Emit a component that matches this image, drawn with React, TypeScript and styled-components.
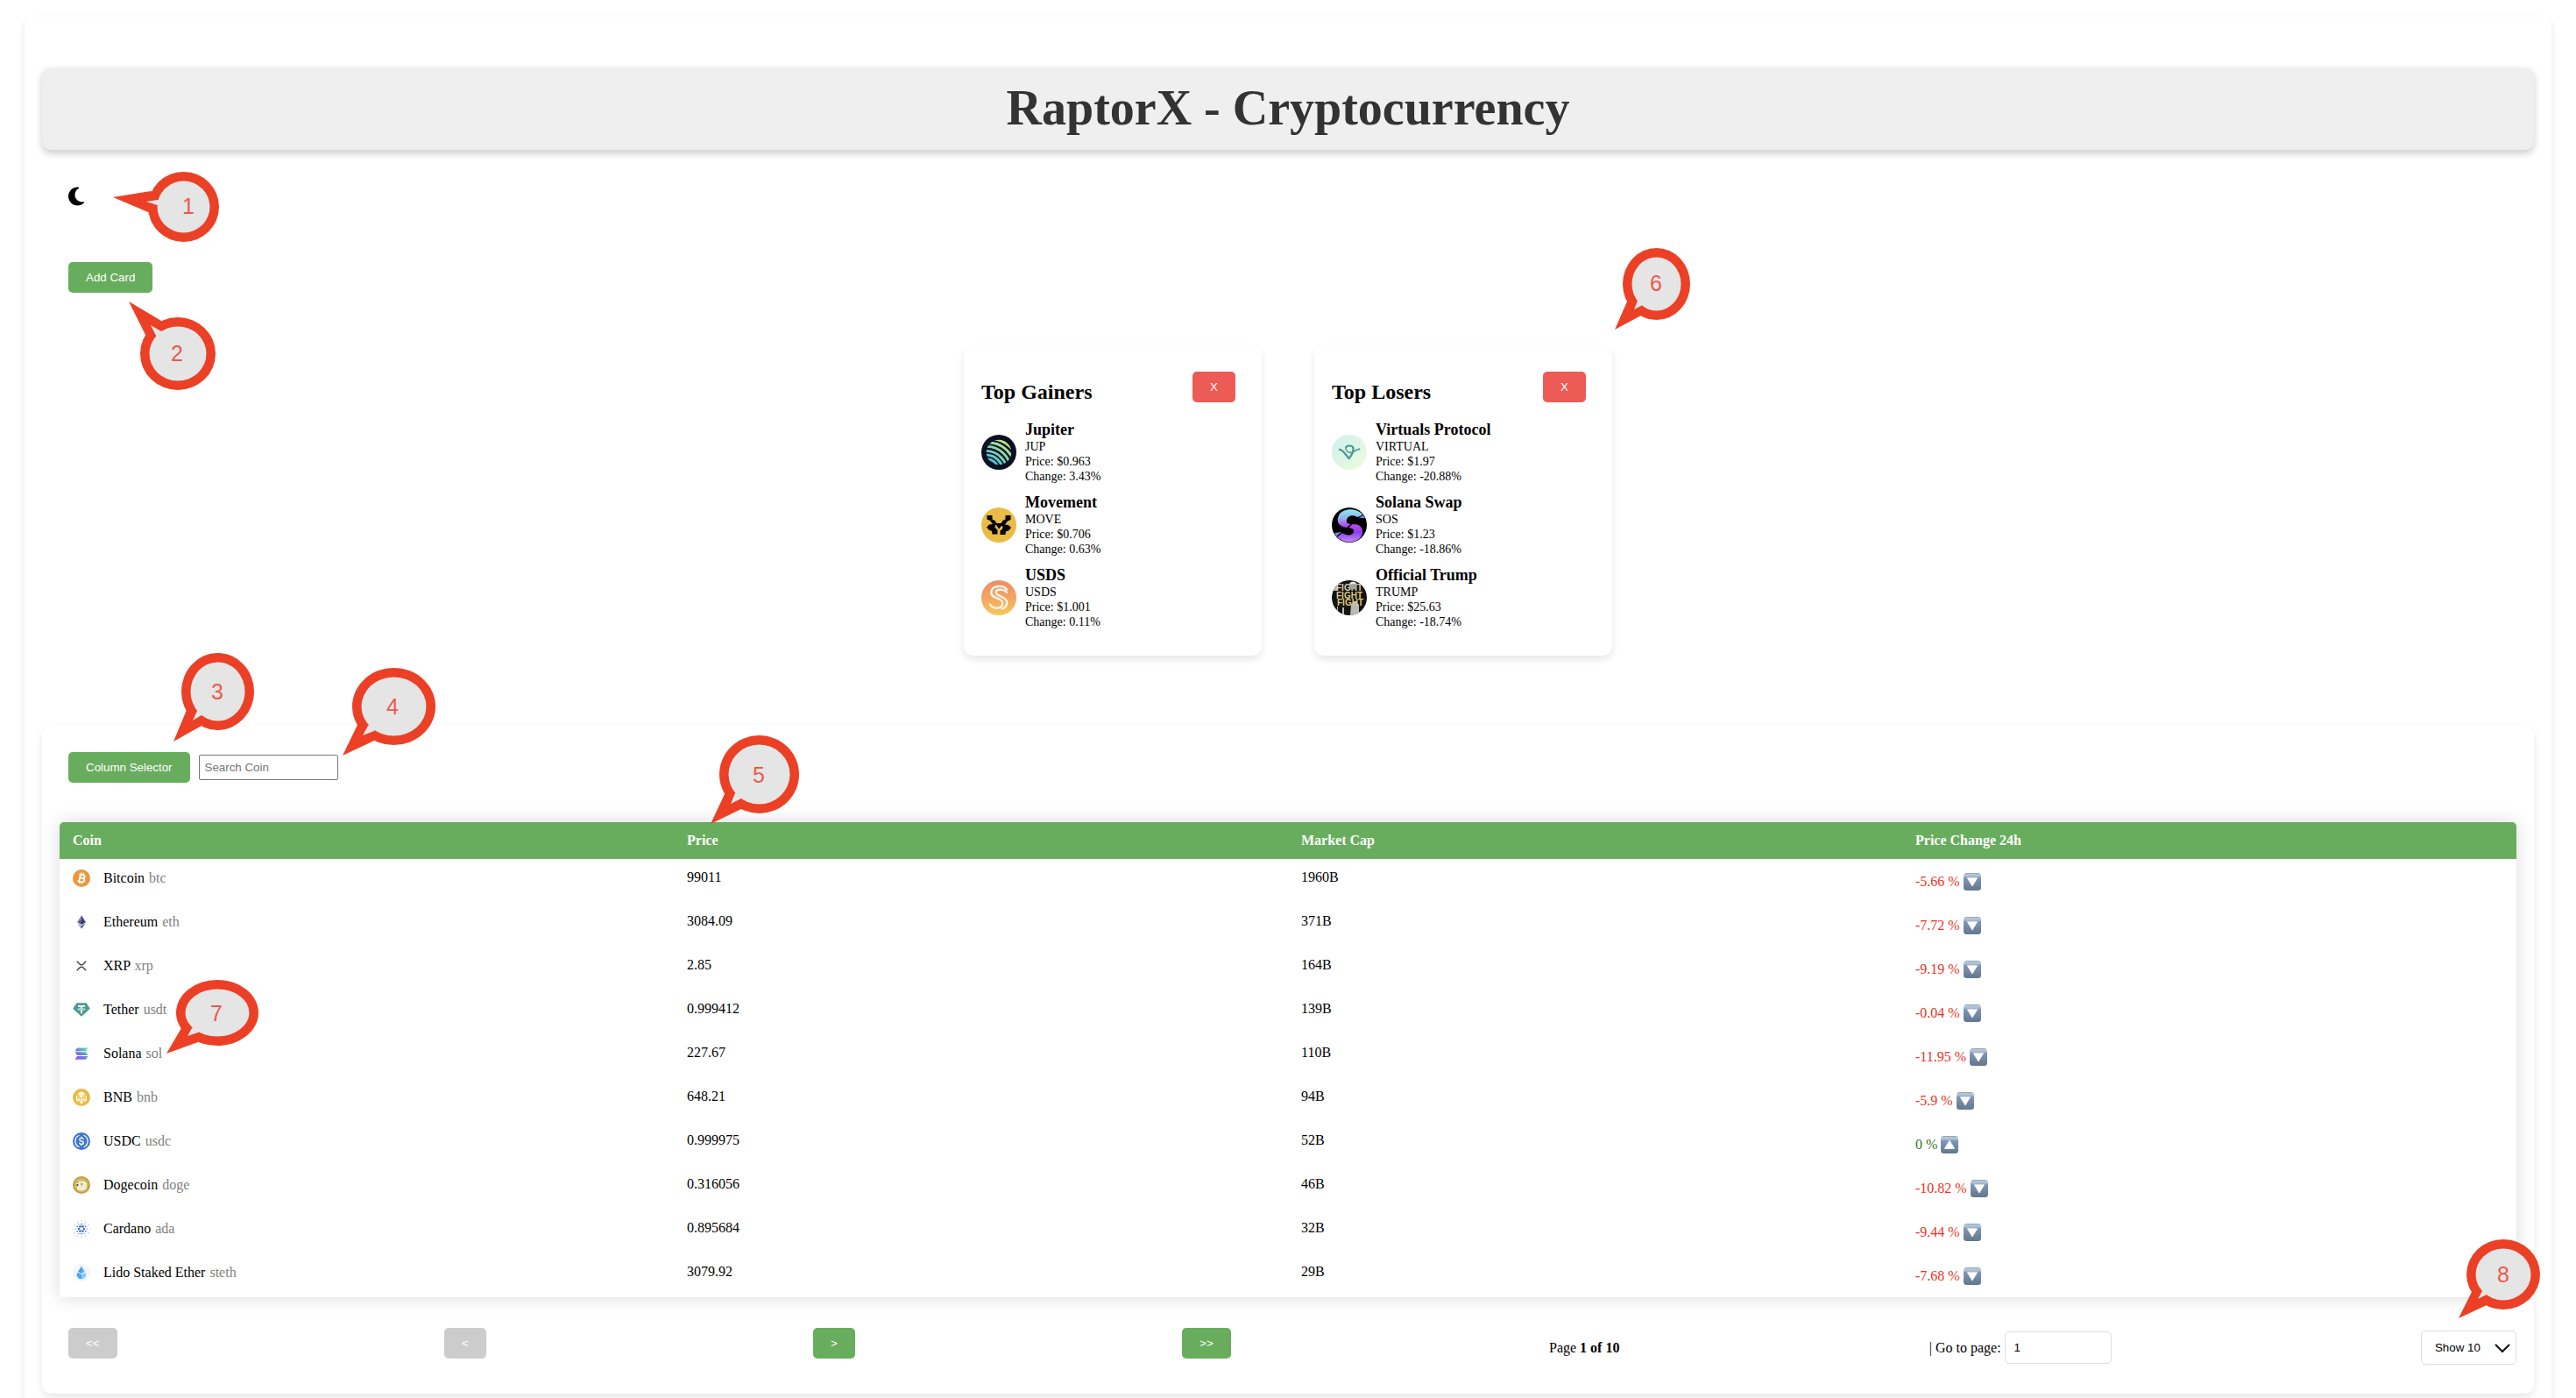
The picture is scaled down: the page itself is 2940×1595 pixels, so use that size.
import React, { useState } from "react";
import styled, { createGlobalStyle } from "styled-components";

const GREEN = "#68ad5d";
const RED = "#ec5b56";
const SERIF = `"Liberation Serif", "Times New Roman", serif`;
const SANS = `"Liberation Sans", Arial, sans-serif`;

const GlobalStyle = createGlobalStyle`
  *, *::before, *::after { box-sizing: border-box; }
  body {
    margin: 0;
    background: #fff;
    color: #000;
    font-family: ${SERIF};
    font-size: 16px;
    line-height: 18px;
  }
`;

/* ---------- layout ---------- */

const Page = styled.div`
  position: relative;
  display: flow-root;
`;

const Container = styled.main`
  margin: 19px 28px;
  padding: 20px;
  border-radius: 10px;
  background: #fff;
  box-shadow: 0 4px 8px rgba(0, 0, 0, 0.1);
`;

const Title = styled.h1`
  margin: 38px 0 0;
  padding: 14px 15px 16px;
  border-radius: 10px;
  background: #efefef;
  color: #333;
  font-size: 56px;
  line-height: 64px;
  text-align: center;
  box-shadow: 0 4px 8px rgba(0, 0, 0, 0.2);
`;

const Toolbar = styled.div`
  display: flex;
  flex-direction: column;
  align-items: flex-start;
  gap: 53px;
  padding: 41px 20px 0;
`;

const ThemeToggle = styled.button`
  display: flex;
  margin: 0 10px;
  padding: 0;
  border: 0;
  background: none;
  color: #000;
  cursor: pointer;
`;

const Button = styled.button<{ $danger?: boolean }>`
  height: 35px;
  margin: 10px 10px 20px;
  padding: 0 20px;
  border: 0;
  border-radius: 5px;
  background: ${(p) => (p.$danger ? RED : GREEN)};
  color: #fff;
  font-family: ${SANS};
  cursor: pointer;

  &:disabled {
    background: #ccc;
    cursor: not-allowed;
  }
`;

/* ---------- cards ---------- */

const Cards = styled.section`
  display: flex;
  flex-wrap: wrap;
  justify-content: center;
  gap: 60px;
  margin: 40px 0 80px;
`;

const Card = styled.article`
  width: 340px;
  padding: 20px 20px 30px;
  border-radius: 10px;
  background: #fff;
  box-shadow: 0 4px 8px rgba(0, 0, 0, 0.1);
`;

const CardHeader = styled.header`
  display: flex;
  align-items: flex-end;
  justify-content: space-between;
`;

const CardTitle = styled.h2`
  margin: 0 0 18px;
  font-size: 24px;
  line-height: 28px;
`;

const Movers = styled.ul`
  display: grid;
  gap: 10px;
  margin: 0;
  padding: 0;
  list-style: none;
`;

const Mover = styled.li`
  display: flex;
  align-items: center;
  gap: 10px;
  font-size: 14px;
  line-height: 17px;
`;

const MoverName = styled.h3`
  margin: 0;
  font-size: 18px;
  line-height: 22px;
`;

/* ---------- table ---------- */

const Panel = styled.section`
  padding: 20px;
  border-radius: 10px;
  background: #fff;
  box-shadow: 0 4px 8px rgba(0, 0, 0, 0.1);
`;

const Filters = styled.div`
  display: flex;
  align-items: center;
`;

const Search = styled.input`
  width: 159px;
  height: 29px;
  margin: 0 0 10px;
  padding: 0 6px;
  border: 1px solid #767676;
  border-radius: 2px;
  font-family: ${SANS};
  &::placeholder { color: #757575; }
`;

const Table = styled.table`
  width: 100%;
  margin: 25px 0;
  border-spacing: 0;
  border-radius: 5px 5px 0 0;
  table-layout: fixed;
  overflow: hidden;
  background: #fff;
  box-shadow: 0 0 20px rgba(0, 0, 0, 0.15);
`;

const Th = styled.th`
  padding: 12px 15px;
  background: ${GREEN};
  color: #fff;
  text-align: left;
`;

const Td = styled.td`
  height: 50px;
  padding: 12px 15px;
  vertical-align: top;
`;

const Coin = styled.div`
  display: flex;
  align-items: center;
  gap: 15px;
  height: 20px;
`;

const Ticker = styled.span`
  margin-left: 1px;
  color: gray;
`;

const Change = styled.div<{ $up: boolean }>`
  display: flex;
  align-items: center;
  gap: 4px;
  padding-top: 2px;
  height: 26px;
  color: ${(p) => (p.$up ? "#2b7519" : "#ea3323")};
`;

/* ---------- pagination ---------- */

const Pager = styled.nav`
  display: flex;
  align-items: center;
  justify-content: space-between;
`;

const GoTo = styled.div`
  display: flex;
  align-items: center;
  gap: 4px;
`;

const PageInput = styled.input`
  width: 122px;
  height: 37px;
  padding: 0 10px;
  border: 1px solid #ddd;
  border-radius: 5px;
  font-family: ${SANS};
`;

const SelectWrap = styled.div`
  display: grid;
  align-items: center;
  justify-items: end;
  & > * { grid-area: 1 / 1; }
  & > svg { margin-right: 6px; pointer-events: none; }
`;

const Select = styled.select`
  height: 39px;
  padding: 0 40px 0 15px;
  border: 1px solid #ddd;
  border-radius: 5px;
  appearance: none;
  background: #fff;
  color: #000;
  font-family: ${SANS};
`;

/* ---------- annotations ---------- */

const CalloutLayer = styled.svg`
  position: absolute;
  overflow: visible;
  pointer-events: none;
`;

const CalloutDigit = styled.text`
  fill: #ea5a4b;
  font-family: ${SANS};
  font-size: 25px;
  text-anchor: middle;
`;

type Pt = [number, number];
type CalloutData = {
  n: number;
  box: [number, number, number, number];
  tip: Pt;
  outer: [Pt, Pt];
  notch: Pt;
  inner: [Pt, Pt];
  digit: Pt;
};

/* box: left, top, right, bottom of the balloon; the rest are points of its tail */
const callouts: CalloutData[] = [
  { n: 1, box: [169, 196, 250, 276], tip: [129, 225], outer: [[172, 218], [169, 242]], notch: [167, 230], inner: [[180, 228], [179, 234]], digit: [215, 244] },
  { n: 2, box: [160, 362, 246, 445], tip: [147, 344], outer: [[184, 366], [166, 382]], notch: [172, 371], inner: [[184, 378], [178, 383]], digit: [202, 412] },
  { n: 3, box: [207, 745, 290, 833], tip: [198, 846], outer: [[213, 810], [230, 828]], notch: [220, 822], inner: [[225, 811], [230, 816]], digit: [248, 798] },
  { n: 4, box: [402, 762, 497, 850], tip: [391, 862], outer: [[408, 827], [427, 845]], notch: [414, 839], inner: [[420, 828], [427, 834]], digit: [448, 815] },
  { n: 5, box: [821, 839, 912, 928], tip: [811, 940], outer: [[827, 906], [846, 923]], notch: [834, 917], inner: [[839, 905], [846, 911]], digit: [866, 893] },
  { n: 6, box: [1852, 283, 1929, 365], tip: [1843, 376], outer: [[1857, 344], [1873, 360]], notch: [1865, 353], inner: [[1869, 343], [1873, 349]], digit: [1890, 332] },
  { n: 7, box: [201, 1118, 295, 1193], tip: [190, 1202], outer: [[207, 1173], [226, 1189]], notch: [214, 1182], inner: [[219, 1173], [226, 1178]], digit: [247, 1165] },
  { n: 8, box: [2815, 1414, 2899, 1494], tip: [2806, 1504], outer: [[2821, 1474], [2838, 1489]], notch: [2828, 1482], inner: [[2833, 1473], [2838, 1477]], digit: [2857, 1463] },
];

function Callout({ n, box, tip, outer, notch, inner, digit }: CalloutData) {
  const [l, t, r, b] = box;
  const w = r - l;
  const h = b - t;
  const at = ([x, y]: Pt) => `${x - l},${y - t}`;
  const center = `${w / 2},${h / 2}`;
  return (
    <CalloutLayer width={w} height={h} style={{ left: l, top: t }} aria-label={`Note ${n}`}>
      <g fill="#eb4025">
        <ellipse cx={w / 2} cy={h / 2} rx={w / 2} ry={h / 2} />
        <polygon points={[at(outer[0]), at(tip), at(outer[1]), center].join(" ")} />
      </g>
      <g fill="#e5e5e5">
        <ellipse cx={w / 2} cy={h / 2} rx={w / 2 - 10.5} ry={h / 2 - 10.5} />
        <polygon points={[at(inner[0]), at(notch), at(inner[1]), center].join(" ")} />
      </g>
      <CalloutDigit x={digit[0] - l} y={digit[1] - t}>{n}</CalloutDigit>
    </CalloutLayer>
  );
}

/* ---------- icons ---------- */

const Moon = () => (
  <svg width="18" height="24" viewBox="0 0 384 512" fill="currentColor" aria-hidden="true">
    <path d="M223.5 32C100 32 0 132.3 0 256S100 480 223.5 480c60.6 0 115.5-24.2 155.8-63.4c5-4.9 6.3-12.5 3.1-18.7s-10.1-9.7-17-8.5c-9.8 1.7-19.8 2.6-30.1 2.6c-96.9 0-175.5-78.8-175.5-176c0-65.8 36-123.1 89.3-153.3c6.1-3.5 9.2-10.5 7.7-17.3s-7.3-11.9-14.3-12.5c-6.3-.5-12.6-.8-19-.8z" />
  </svg>
);

const Chevron = () => (
  <svg width="20" height="14" viewBox="0 0 20 14" fill="none" stroke="#111" strokeWidth="2" aria-hidden="true">
    <path d="M2 3l8 8 8-8" />
  </svg>
);

const Arrow = ({ up }: { up: boolean }) => (
  <svg width="20" height="20" viewBox="0 0 20 20" role="img" aria-label={up ? "up" : "down"}>
    <defs>
      <linearGradient id="arrowTile" x1="0" y1="0" x2="0" y2="1">
        <stop offset="0" stopColor="#8497a8" />
        <stop offset=".08" stopColor="#b9cbdb" />
        <stop offset=".22" stopColor="#a3b7cd" />
        <stop offset=".27" stopColor="#7f97b8" />
        <stop offset=".6" stopColor="#7488a5" />
        <stop offset="1" stopColor="#62768c" />
      </linearGradient>
    </defs>
    <rect width="20" height="20" rx="3.5" fill="url(#arrowTile)" />
    <path d={up ? "M10 5.2L15.6 14.4H4.4z" : "M10 15L4.4 5.8H15.6z"} fill="#fff" stroke="#fff" strokeWidth=".8" strokeLinejoin="round" />
  </svg>
);

const Logo = ({ id, size }: { id: string; size: number }) => (
  <svg width={size} height={size} viewBox="0 0 40 40" aria-hidden="true">{logos[id]}</svg>
);

const logos: Record<string, React.ReactNode> = {
  JUP: (
    <>
      <defs>
        <linearGradient id="jup" gradientUnits="userSpaceOnUse" x1="10" y1="34" x2="30" y2="7">
          <stop offset="0" stopColor="#45b8e0" />
          <stop offset=".5" stopColor="#7fd6b0" />
          <stop offset="1" stopColor="#cfe978" />
        </linearGradient>
        <clipPath id="jupDisc"><circle cx="20" cy="20" r="14.3" /></clipPath>
      </defs>
      <circle cx="20" cy="20" r="20" fill="#0b1022" />
      <g fill="none" stroke="url(#jup)" strokeWidth="2.9" clipPath="url(#jupDisc)">
        <circle cx="5" cy="43" r="15.5" />
        <circle cx="5" cy="43" r="20" />
        <circle cx="5" cy="43" r="24.6" />
        <circle cx="6" cy="41" r="27.6" />
        <circle cx="8" cy="39" r="30" />
        <circle cx="10" cy="37" r="32.5" />
      </g>
    </>
  ),
  MOVE: (
    <>
      <circle cx="20" cy="20" r="20" fill="#e8bc45" />
      <path d="M6.5 9h6v4.500l3 1.500 2 3h5l2-3 3-1.500V9h6v5l-3.500 1.500-3 4 4 .5 3 3-2.500 3-3.500 1.500-.5 3.500h-6v-4.500l3-2.500-.5-3h-1L20 24.500 17 20h-1l-.5 3 3 2.500V30.500h-6l-.5-3.500-3.500-1.500-2.500-3 3-3 4-.5-3-4-3.500-1.500z" />
    </>
  ),
  USDS: (
    <>
      <defs>
        <linearGradient id="usds" x1="0" y1="0" x2="0" y2="1">
          <stop offset="0" stopColor="#ee8d66" />
          <stop offset=".55" stopColor="#f2a763" />
          <stop offset="1" stopColor="#f7cb55" />
        </linearGradient>
      </defs>
      <circle cx="20" cy="20" r="20" fill="url(#usds)" />
      <path d="M29 10.500C25.500 5.500 12 5 11.300 13.500c-.3 5 5 6.500 9 8 6 2.500 4.500 9-.8 10-4.500.8-8-1-9.500-4M29 14c-2-3.500-12-5-12.500-.5 0 3 3.500 4 7 5.500 9 4 6 11.500.5 13.500" fill="none" stroke="#fff3e6" strokeWidth="2.400" strokeLinecap="round" />
    </>
  ),
  VIRTUAL: (
    <>
      <defs>
        <linearGradient id="virtual" x1="0" y1="0" x2="1" y2="1">
          <stop offset="0" stopColor="#cdeff0" />
          <stop offset="1" stopColor="#effcda" />
        </linearGradient>
      </defs>
      <circle cx="20" cy="20" r="20" fill="url(#virtual)" />
      <g fill="none" stroke="#4b9794">
        <path d="M16 15.500c0-4 8-4 8.500 0 .3 4-2 8-5 11.500-3.500-3-5-9-11.500-10.500" strokeWidth="2.200" />
        <path d="M16 15.500c0 4 4 5.500 7 4.500 3-1.200 5-3 8.500-3.800" strokeWidth="1.600" />
      </g>
      <circle cx="31.500" cy="16.500" r=".9" fill="#4b9794" />
    </>
  ),
  SOS: (
    <>
      <defs>
        <clipPath id="sosDisc"><circle cx="20" cy="20" r="19.500" /></clipPath>
        <linearGradient id="sos" x1="0" y1="0" x2="0" y2="1">
          <stop offset="0" stopColor="#8cecf0" />
          <stop offset=".3" stopColor="#96a6ee" />
          <stop offset=".48" stopColor="#b44bf0" />
          <stop offset=".7" stopColor="#8b40ec" />
          <stop offset="1" stopColor="#c391f5" />
        </linearGradient>
      </defs>
      <circle cx="20" cy="20" r="20" />
      <g clipPath="url(#sosDisc)">
        <path d="M36 9C30 0 12 0 8 9c-4 9 2 13 9 14 4 .6 8 0 8 4 0 5-8 6-13 2L4 33c6 8 24 10 29 1 5-8 1-15-9-15-5 0-8-1-7-5 1-5 8-6 12-3z" fill="url(#sos)" />
        <path d="M36 8L6 33" stroke="#000" strokeWidth="1.600" />
        <path d="M30 13l8-6v5h-6zM3 29l8-1-6 5z" fill="#7f8bf0" />
      </g>
    </>
  ),
  TRUMP: (
    <>
      <defs>
        <clipPath id="trumpDisc"><circle cx="20" cy="20" r="20" /></clipPath>
      </defs>
      <g clipPath="url(#trumpDisc)">
        <rect width="40" height="40" fill="#15130f" />
        <path d="M0 10l7-5v7H0zM21 40l1-13 5-3 4 4 0 12zM12 31h2v9h-2zM6 30h1v8H6z" fill="#b9b9b6" />
        <g fill="#dcc983" fontFamily="Liberation Sans, Arial, sans-serif" fontWeight="700" fontSize="10">
          <text x="5" y="12" fill="#d6cfb6">FIGHT</text>
          <text x="5" y="20.500">FIGHT</text>
          <text x="6" y="29">FIGHT</text>
        </g>
        <circle cx="24" cy="6" r="4.500" fill="#a3a19b" />
        <path d="M20 5c1-4 7-4 9 0l-4-1z" fill="#ecece8" />
      </g>
    </>
  ),
  btc: (
    <>
      <circle cx="20" cy="20" r="20" fill="#e9983d" />
      <g transform="rotate(13 20 20)" fill="none" stroke="#fff" strokeWidth="3.600">
        <path d="M13 11.500h9c6 0 6 8 0 8h-5m5 0c7.500 0 7.500 9 0 9h-9M16 11.500v17" />
        <path d="M18 7v4M22.500 7v4M18 29v4M22.500 29v4" strokeWidth="2.400" />
      </g>
    </>
  ),
  eth: (
    <>
      <path d="M20 4.500l9.500 15.700L20 26z" fill="#454a75" />
      <path d="M20 4.500l-9.500 15.700L20 26z" fill="#7c82b4" />
      <path d="M20 15.500l9.500 4.700L20 26z" fill="#363a68" />
      <path d="M20 15.500l-9.500 4.700L20 26z" fill="#555b8e" />
      <path d="M20 28.500l9.500-6L20 35.500z" fill="#484d80" />
      <path d="M20 28.500l-9.500-6L20 35.500z" fill="#8a90c0" />
    </>
  ),
  xrp: (
    <path d="M9.500 9.500l6 6c2.500 2.400 6.500 2.400 9 0l6-6M9.500 30.500l6-6c2.500-2.400 6.500-2.400 9 0l6 6" fill="none" stroke="#33383d" strokeWidth="2.600" />
  ),
  usdt: (
    <>
      <path d="M9 4.500h22l8.500 13L20 35.500.5 17.500z" fill="#4a9a93" />
      <path d="M12 10h16v3.500h-6v3c9 .7 9 4.300 0 5v7h-4v-7c-9-.7-9-4.300 0-5v-3h-6z" fill="#fff" />
      <ellipse cx="20" cy="18.800" rx="6" ry="1" fill="none" stroke="#4a9a93" strokeWidth="1" />
    </>
  ),
  sol: (
    <>
      <defs>
        <linearGradient id="sol" gradientUnits="userSpaceOnUse" x1="8" y1="33" x2="32" y2="7">
          <stop offset="0" stopColor="#9447f5" />
          <stop offset=".5" stopColor="#6a86d8" />
          <stop offset="1" stopColor="#5fe9ac" />
        </linearGradient>
      </defs>
      <path d="M10 7H35l-5 7.400H5zM5 16.500h25l5 7.400H10zM10 26H35l-5 7.400H5z" fill="url(#sol)" />
    </>
  ),
  bnb: (
    <>
      <circle cx="20" cy="20" r="20" fill="#e9bb41" />
      <g fill="none" stroke="#fff" strokeWidth="2.800">
        <path d="M12 12.500l8-4.500 8 4.500M9.500 16v10l4.500 2.700M30.500 16v10l-4.500 2.700M13 15.500l7 4 7-4M20 19.500v13M16 30.500l4 2.500 4-2.500M14.500 22v3l3 2M25.500 22v3l-3 2" />
        <path d="M17 13.500l3-1.700 3 1.700-3 1.700z" />
      </g>
    </>
  ),
  usdc: (
    <>
      <circle cx="20" cy="20" r="20" fill="#3f75cb" />
      <g fill="none" stroke="#fff" strokeWidth="2.600">
        <path d="M15 6.500a14.500 14.500 0 000 27M25 6.500a14.500 14.500 0 010 27" />
        <path d="M24.500 16.500c-.5-5-9-4.500-9 0 0 5 9.300 2 9.300 7 0 4.500-9.300 4.500-9.600 0M20 9.500v4M20 26.500v4" />
      </g>
    </>
  ),
  doge: (
    <>
      <circle cx="20" cy="20" r="20" fill="#b9a146" />
      <circle cx="20" cy="20" r="16.500" fill="#cdb863" />
      <path d="M10 8l6 3h7c8 1 10 6 9 13-1 6-5 9-12 9-7 0-11-2-10-8l-1-7z" fill="#f5ecd0" />
      <path d="M10 8l4 5-3 4z" fill="#a58c38" />
      <circle cx="11" cy="20" r="1.800" fill="#30291a" />
      <path d="M19 15c4 2 4 6 1 8" fill="none" stroke="#c9b05a" strokeWidth="2" />
      <circle cx="20" cy="18" r="1.300" fill="#30291a" />
    </>
  ),
  ada: (
    <g fill="#3f6fcf">
      {Array.from({ length: 6 }, (_, i) => {
        const a = (i * Math.PI) / 3;
        const p = (r: number, o = 0): Pt => [20 + r * Math.cos(a + o), 20 + r * Math.sin(a + o)];
        const dots: [Pt, number][] = [
          [p(6), 2.6],
          [p(11, Math.PI / 6), 1.7],
          [p(12.5), 1.2],
          [p(18.5, Math.PI / 6), 1],
          [p(18.5), 0.9],
        ];
        return dots.map(([[x, y], r], k) => <circle key={`${i}-${k}`} cx={x} cy={y} r={r} />);
      })}
    </g>
  ),
  steth: (
    <>
      <circle cx="20" cy="20" r="20" fill="#f3f5f8" />
      <path d="M20 5.500l7.500 12L20 22l-7.500-4.500z" fill="#5cb0f8" />
      <path d="M20 5.500V22l-7.500-4.500z" fill="#3d9df5" />
      <path d="M11.500 19.500L20 24.500l8.500-5c5 8-1 15-8.500 15s-13.500-7-8.500-15z" fill="#8bcbfb" />
      <path d="M11.500 19.500L20 24.500v10c-7.500 0-13.500-7-8.500-15z" fill="#4ba6f6" />
    </>
  ),
};

/* ---------- data ---------- */

type MoverRow = { name: string; symbol: string; price: string; change: string };

const initialCards: { title: string; rows: MoverRow[] }[] = [
  {
    title: "Top Gainers",
    rows: [
      { name: "Jupiter", symbol: "JUP", price: "0.963", change: "3.43" },
      { name: "Movement", symbol: "MOVE", price: "0.706", change: "0.63" },
      { name: "USDS", symbol: "USDS", price: "1.001", change: "0.11" },
    ],
  },
  {
    title: "Top Losers",
    rows: [
      { name: "Virtuals Protocol", symbol: "VIRTUAL", price: "1.97", change: "-20.88" },
      { name: "Solana Swap", symbol: "SOS", price: "1.23", change: "-18.86" },
      { name: "Official Trump", symbol: "TRUMP", price: "25.63", change: "-18.74" },
    ],
  },
];

const coins: [string, string, string, string, number][] = [
  ["Bitcoin", "btc", "99011", "1960B", -5.66],
  ["Ethereum", "eth", "3084.09", "371B", -7.72],
  ["XRP", "xrp", "2.85", "164B", -9.19],
  ["Tether", "usdt", "0.999412", "139B", -0.04],
  ["Solana", "sol", "227.67", "110B", -11.95],
  ["BNB", "bnb", "648.21", "94B", -5.9],
  ["USDC", "usdc", "0.999975", "52B", 0],
  ["Dogecoin", "doge", "0.316056", "46B", -10.82],
  ["Cardano", "ada", "0.895684", "32B", -9.44],
  ["Lido Staked Ether", "steth", "3079.92", "29B", -7.68],
];

export default function App() {
  const [cards, setCards] = useState(initialCards);
  const [page, setPage] = useState("1");
  const [query, setQuery] = useState("");
  const shown = coins.filter(([name]) => name.toLowerCase().includes(query.toLowerCase()));

  return (
    <Page>
      <GlobalStyle />
      <Container>
        <Title>RaptorX - Cryptocurrency</Title>
        <Toolbar>
          <ThemeToggle aria-label="Toggle theme"><Moon /></ThemeToggle>
          <Button onClick={() => setCards(initialCards)}>Add Card</Button>
        </Toolbar>

        <Cards>
          {cards.map((card) => (
            <Card key={card.title}>
              <CardHeader>
                <CardTitle>{card.title}</CardTitle>
                <Button $danger onClick={() => setCards(cards.filter((c) => c !== card))}>X</Button>
              </CardHeader>
              <Movers>
                {card.rows.map((row) => (
                  <Mover key={row.symbol}>
                    <Logo id={row.symbol} size={40} />
                    <div>
                      <MoverName>{row.name}</MoverName>
                      <div>{row.symbol}</div>
                      <div>Price: ${row.price}</div>
                      <div>Change: {row.change}%</div>
                    </div>
                  </Mover>
                ))}
              </Movers>
            </Card>
          ))}
        </Cards>

        <Panel>
          <Filters>
            <Button>Column Selector</Button>
            <Search
              aria-label="Search Coin"
              placeholder="Search Coin"
              value={query}
              onChange={(e) => setQuery(e.target.value)}
            />
          </Filters>

          <Table>
            <thead>
              <tr>
                <Th>Coin</Th>
                <Th>Price</Th>
                <Th>Market Cap</Th>
                <Th>Price Change 24h</Th>
              </tr>
            </thead>
            <tbody>
              {shown.map(([name, ticker, price, cap, change]) => (
                <tr key={ticker}>
                  <Td>
                    <Coin>
                      <Logo id={ticker} size={20} />
                      <span>{name} <Ticker>{ticker}</Ticker></span>
                    </Coin>
                  </Td>
                  <Td>{price}</Td>
                  <Td>{cap}</Td>
                  <Td>
                    <Change $up={change >= 0}>
                      <span>{`${change} %`}</span>
                      <Arrow up={change >= 0} />
                    </Change>
                  </Td>
                </tr>
              ))}
            </tbody>
          </Table>

          <Pager aria-label="Pagination">
            <Button disabled>{"<<"}</Button>
            <Button disabled>{"<"}</Button>
            <Button>{">"}</Button>
            <Button>{">>"}</Button>
            <span>Page <strong>1 of 10</strong></span>
            <GoTo>
              <label htmlFor="goto">| Go to page:</label>
              <PageInput id="goto" inputMode="numeric" value={page} onChange={(e) => setPage(e.target.value)} />
            </GoTo>
            <SelectWrap>
              <Select aria-label="Rows per page" defaultValue="10">
                <option value="10">Show 10</option>
                <option value="20">Show 20</option>
                <option value="50">Show 50</option>
              </Select>
              <Chevron />
            </SelectWrap>
          </Pager>
        </Panel>
      </Container>
      {callouts.map((c) => <Callout key={c.n} {...c} />)}
    </Page>
  );
}
